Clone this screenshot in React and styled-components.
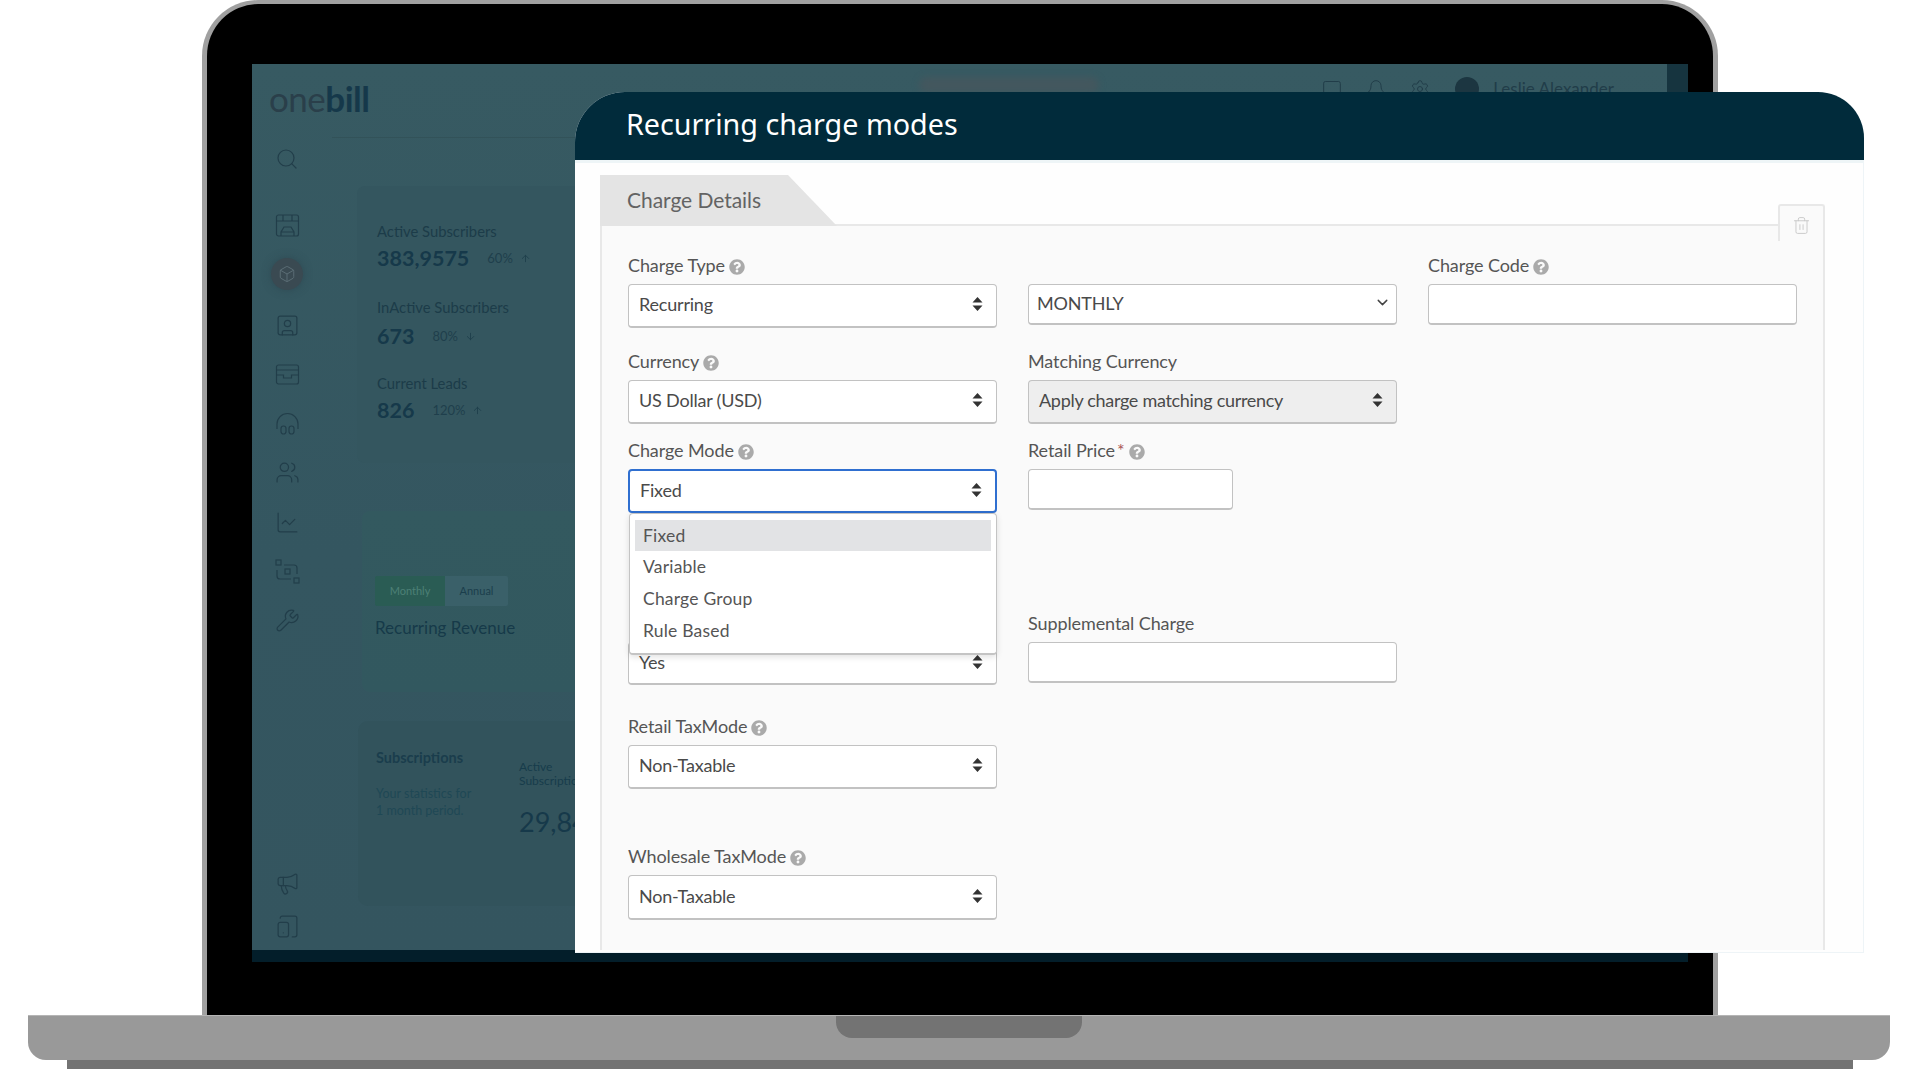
import styled, { createGlobalStyle } from "styled-components";
import { FaQuestionCircle } from "react-icons/fa";
import {
  Search,
  Box,
  SquareUser,
  Users,
  ChartLine,
  Wrench,
  Megaphone,
  TabletSmartphone,
  ArrowUp,
  ArrowDown,
  ChevronDown,
  Trash2,
  MessageSquare,
  Bell,
  Settings,
} from "lucide-react";

const GlobalStyle = createGlobalStyle`
  html, body { margin: 0; padding: 0; background: #fff; overflow: hidden; }
  * { box-sizing: border-box; }
`;

const Stage = styled.div`
  position: relative;
  width: 1920px;
  height: 1069px;
  overflow: hidden;
  background: #fff;
  font-family: Lato, "Liberation Sans", sans-serif;
`;

const Lid = styled.div`
  width: 1516px;
  height: 1015px;
  margin-left: 202px;
  padding: 60px 25px 0 45px;
  background: #000;
  border: solid #a0a0a0;
  border-width: 4px 5px 0 5px;
  border-radius: 56px 56px 0 0;
`;

const Screen = styled.div`
  width: 1436px;
  height: 898px;
  display: flex;
  flex-direction: column;
  background: #16343f;
`;

const Dash = styled.div`
  width: 1415px;
  height: 886px;
  display: flex;
  overflow: hidden;
  background: linear-gradient(180deg, #375a62 0%, #345660 55%, #34555f 100%);
  color: #1d3c49;
`;

const BottomStrip = styled.div`
  height: 12px;
  width: 1436px;
  background: #031e2a;
`;

const Sidebar = styled.aside`
  width: 80px;
  flex: none;
  display: flex;
  flex-direction: column;
  align-items: center;
  padding: 0 10px 11px 0;
`;

const Logo = styled.div`
  align-self: flex-start;
  margin: 15px 0 0 17px;
  height: 38px;
  font-size: 35px;
  line-height: 38px;
  letter-spacing: -0.5px;
  font-weight: 400;
  color: #2a3f4a;
  b {
    font-weight: 700;
    color: #15384a;
  }
`;

const SearchSlot = styled.div`
  margin-top: 30px;
  height: 24px;
  color: #223e4a;
`;

const IconStack = styled.div`
  margin-top: 42px;
  display: flex;
  flex-direction: column;
  align-items: center;
  gap: 24.3px;
  color: #223e4a;
  svg {
    display: block;
  }
`;

const ActiveIcon = styled.div`
  width: 32px;
  height: 32px;
  margin: -4px 0 -2px;
  border-radius: 50%;
  display: flex;
  align-items: center;
  justify-content: center;
  background: #3a4a52;
  color: #5d7078;
  box-shadow: 0 0 8px rgba(40, 60, 70, 0.5);
`;

const BottomIcons = styled(IconStack)`
  margin-top: auto;
  gap: 18px;
`;

const Content = styled.main`
  flex: 1;
  min-width: 0;
`;

const TopBar = styled.header`
  height: 74px;
  padding: 0 53px 24px 587px;
  display: flex;
  align-items: center;
  gap: 24px;
  border-bottom: 1px solid #325259;
  font-size: 17px;
  color: #213d49;
`;

const SearchPill = styled.div`
  width: 180px;
  height: 16px;
  margin: -8px auto 0 0;
  border-radius: 8px;
  background: #43575e;
  filter: blur(3px);
`;

const Avatar = styled.div`
  width: 24px;
  height: 24px;
  margin: 0 -10px 0 1px;
  border-radius: 50%;
  background: #1c3641;
`;

const StatsCard = styled.section`
  height: 277px;
  margin: 48px 0 0 25px;
  padding: 35px 0 0 20px;
  background: #34565f;
  border-radius: 8px;
`;

const Stat = styled.div`
  margin-top: ${(p) => p.$top || 0}px;
`;

const StatLabel = styled.div`
  height: 20px;
  line-height: 20px;
  font-size: 14.8px;
  color: #1c3c49;
`;

const StatRow = styled.div`
  display: flex;
  align-items: center;
  gap: 18px;
  height: 32px;
  margin-top: ${(p) => p.$top || 1}px;
`;

const StatValue = styled.div`
  font-size: 21.5px;
  font-weight: 700;
  color: #16394a;
`;

const StatDelta = styled.div`
  display: flex;
  align-items: center;
  gap: 7px;
  font-size: 13px;
  color: #1f3f4c;
  svg {
    display: block;
  }
`;

const RevenueCard = styled.section`
  height: 181px;
  margin: 48px 0 0 30px;
  padding: 65px 0 0 13px;
  border-radius: 8px;
  background: linear-gradient(180deg, #33595f 0%, #32585f 100%);
`;

const Toggle = styled.div`
  display: flex;
  width: 133px;
  height: 30px;
  font-size: 11px;
  line-height: 30px;
  text-align: center;
`;

const ToggleItem = styled.div`
  width: ${(p) => (p.$on ? 70 : 63)}px;
  background: ${(p) => (p.$on ? "#2a5c54" : "#3a6069")};
  color: ${(p) => (p.$on ? "#4d8076" : "#1a3e4c")};
  border-radius: ${(p) => (p.$on ? "2px 0 0 2px" : "0 2px 2px 0")};
`;

const CardTitle = styled.div`
  margin-top: 10px;
  height: 24px;
  line-height: 24px;
  font-size: 17px;
  color: #163a49;
`;

const SubsCard = styled.section`
  height: 185px;
  margin: 29px 0 0 26px;
  display: flex;
  border-radius: 10px;
  background: #32535c;
`;

const SubsIntro = styled.div`
  width: 161px;
  padding: 27px 0 0 18px;
`;

const SubsTitle = styled.div`
  height: 20px;
  line-height: 20px;
  font-size: 14.5px;
  font-weight: 700;
  color: #1a3d4c;
`;

const SubsNote = styled.div`
  margin-top: 17px;
  font-size: 12.5px;
  line-height: 17px;
  color: #1f4855;
`;

const SubsStat = styled.div`
  padding-top: 39px;
  white-space: nowrap;
  font-size: 12px;
  line-height: 14px;
  color: #173c4b;
`;

const SubsNumber = styled.div`
  margin-top: 16px;
  font-size: 27px;
  line-height: 36px;
  color: #16394a;
`;

const Base = styled.div`
  width: 1862px;
  height: 45px;
  margin-left: 28px;
  display: flex;
  justify-content: center;
  background: #999;
  border-top: 1px solid #b5b5b5;
  border-radius: 0 0 18px 18px;
`;

const Notch = styled.div`
  width: 246px;
  height: 22px;
  background: #737373;
  border-radius: 0 0 16px 16px;
`;

const Foot = styled.div`
  width: 1786px;
  height: 9px;
  margin-left: 67px;
  background: #737373;
`;

const Panel = styled.section`
  position: absolute;
  left: 575px;
  top: 92px;
  width: 1289px;
  height: 861px;
  display: flex;
  flex-direction: column;
  background: #fefefe;
  box-shadow: inset -1px -1px 0 #eef4f7;
  border-radius: 50px 46px 0 0;
`;

const PanelHeader = styled.h1`
  flex: none;
  height: 68px;
  margin: 0;
  padding: 0 0 6px 51px;
  display: flex;
  align-items: center;
  background: #012b3b;
  border-radius: 50px 46px 0 0;
  font-family: "Noto Sans", "Liberation Sans", sans-serif;
  font-size: 28.7px;
  font-weight: 400;
  color: #fff;
  box-shadow: 0 3px 0 #eef5f7;
`;

const PanelBody = styled.div`
  flex: 1;
  min-height: 0;
  padding: 15px 39px 3px 25px;
  display: flex;
  flex-direction: column;
`;

const TabBar = styled.div`
  position: relative;
  flex: none;
  height: 51px;
  margin-bottom: -2px;
`;

const Tab = styled.div`
  width: 237px;
  height: 51px;
  padding: 0 0 2px 27px;
  display: flex;
  align-items: center;
  background: #e4e4e4;
  clip-path: polygon(0 0, 188px 0, 100% 100%, 0 100%);
  font-size: 21px;
  letter-spacing: -0.05px;
  color: #636363;
`;

const DeleteTab = styled.div`
  position: absolute;
  right: 0;
  top: 29px;
  width: 47px;
  height: 37px;
  padding-top: 3px;
  display: flex;
  align-items: center;
  justify-content: center;
  background: #fafafa;
  border: 2px solid #e8e8e8;
  border-bottom: 0;
  border-radius: 3px 3px 0 0;
  color: #c9c9c9;
  z-index: 1;
`;

const Fieldset = styled.div`
  flex: 1;
  min-height: 0;
  padding: 27px 26px 0;
  background: #fafafa;
  border: solid #e8e8e8;
  border-width: 2px 2px 0 2px;
`;

const Row = styled.div`
  display: grid;
  grid-template-columns: repeat(3, 369px);
  column-gap: 31px;
  align-items: start;
  margin-top: ${(p) => p.$top || 0}px;
`;

const Field = styled.div`
  position: relative;
  width: ${(p) => (p.$narrow ? "205px" : "auto")};
`;

const Label = styled.label`
  height: 24px;
  margin-bottom: 7px;
  display: flex;
  align-items: center;
  gap: 4px;
  font-size: 18px;
  letter-spacing: -0.1px;
  color: #555;
  svg {
    margin-top: 4px;
    flex: none;
  }
  i {
    margin-left: -2px;
    font-style: normal;
    color: #a55;
  }
`;

const Control = styled.div`
  height: ${(p) => p.$h || 44}px;
  margin-top: ${(p) => p.$top || 0}px;
  padding: 0 ${(p) => p.$end || 13}px 3px ${(p) => p.$pad || 10}px;
  display: flex;
  align-items: center;
  justify-content: space-between;
  background: ${(p) => (p.$disabled ? "#eee" : "#fff")};
  border: ${(p) => (p.$focus ? "2px solid #2f6fd0" : "1px solid #c2c2c2")};
  border-bottom-width: 2px;
  border-radius: 4px;
  font-size: 18px;
  letter-spacing: ${(p) => (p.$disabled ? "-0.3px" : "-0.2px")};
  color: #4a4a4a;
`;

const Menu = styled.ul`
  position: absolute;
  left: 1px;
  top: 75px;
  z-index: 3;
  width: 368px;
  height: 142px;
  margin: 0;
  padding: 6px 5px;
  list-style: none;
  background: #fff;
  border: 1px solid #c4c4c4;
  border-bottom-width: 2px;
  border-radius: 4px;
  box-shadow: 0 2px 6px rgba(0, 0, 0, 0.12);
`;

const MenuItem = styled.li`
  height: ${(p) => (p.$active ? 31 : 32)}px;
  padding: 0 0 1px 8px;
  display: flex;
  align-items: center;
  background: ${(p) => (p.$active ? "#e2e3e5" : "transparent")};
  font-size: 17.5px;
  letter-spacing: 0.2px;
  color: #555;
`;

const Arrows = () => (
  <svg width="11" height="16" viewBox="0 0 11 16" fill="#333">
    <path d="M5.5 1 10.5 6.5H.5zM5.5 15 .5 9.5h10z" />
  </svg>
);

const Help = () => <FaQuestionCircle size={16} color="#aaa" />;

const ShopIcon = () => (
  <svg width="25" height="25" viewBox="0 0 25 25" fill="none" stroke="currentColor" strokeWidth="1.2">
    <rect x="1.5" y="2" width="22" height="21" rx="2" />
    <path d="M1.5 8h22M8 2v6M17 2v6M6 23v-4l3-5h7l3 5v4M6 19h13" />
  </svg>
);

const TrayIcon = () => (
  <svg width="25" height="25" viewBox="0 0 25 25" fill="none" stroke="currentColor" strokeWidth="1.2">
    <rect x="1.5" y="3" width="22" height="19" rx="2" />
    <path d="M1.5 8h22M1.5 13h7v3h8v-3h7" />
  </svg>
);

const HeadsetIcon = () => (
  <svg width="25" height="25" viewBox="0 0 25 25" fill="none" stroke="currentColor" strokeWidth="1.2">
    <path d="M2 18v-5a10.5 10.5 0 0 1 21 0v5" />
    <rect x="6" y="15" width="5" height="8" rx="2.5" />
    <rect x="14" y="15" width="5" height="8" rx="2.5" />
  </svg>
);

const LinkIcon = () => (
  <svg width="25" height="25" viewBox="0 0 25 25" fill="none" stroke="currentColor" strokeWidth="1.2">
    <rect x="1" y="1" width="5" height="5" />
    <rect x="10" y="10" width="5" height="5" />
    <rect x="19" y="19" width="5" height="5" />
    <path d="M9 6h10q3 0 3 3v6M16 20H5q-3 0-3-3v-6" />
  </svg>
);

export default function App() {
  return (
    <Stage>
      <GlobalStyle />
      <Lid>
        <Screen>
          <Dash>
            <Sidebar>
              <Logo>one<b>bill</b></Logo>
              <SearchSlot><Search size={24} strokeWidth={1.2} /></SearchSlot>
              <IconStack>
                <ShopIcon />
                <ActiveIcon><Box size={18} strokeWidth={1.2} /></ActiveIcon>
                <SquareUser size={25} strokeWidth={1.2} />
                <TrayIcon />
                <HeadsetIcon />
                <Users size={25} strokeWidth={1.2} />
                <ChartLine size={25} strokeWidth={1.2} />
                <LinkIcon />
                <Wrench size={25} strokeWidth={1.2} />
              </IconStack>
              <BottomIcons>
                <Megaphone size={25} strokeWidth={1.2} />
                <TabletSmartphone size={25} strokeWidth={1.2} />
              </BottomIcons>
            </Sidebar>
            <Content>
              <TopBar>
                <SearchPill />
                <MessageSquare size={20} strokeWidth={1.2} />
                <Bell size={20} strokeWidth={1.2} />
                <Settings size={20} strokeWidth={1.2} />
                <Avatar />
                <span>Leslie Alexander</span>
              </TopBar>
              <StatsCard>
                <Stat>
                  <StatLabel>Active Subscribers</StatLabel>
                  <StatRow>
                    <StatValue>383,9575</StatValue>
                    <StatDelta>60% <ArrowUp size={11} /></StatDelta>
                  </StatRow>
                </Stat>
                <Stat $top={23}>
                  <StatLabel>InActive Subscribers</StatLabel>
                  <StatRow $top={3}>
                    <StatValue>673</StatValue>
                    <StatDelta>80% <ArrowDown size={11} /></StatDelta>
                  </StatRow>
                </Stat>
                <Stat $top={21}>
                  <StatLabel>Current Leads</StatLabel>
                  <StatRow>
                    <StatValue>826</StatValue>
                    <StatDelta>120% <ArrowUp size={11} /></StatDelta>
                  </StatRow>
                </Stat>
              </StatsCard>
              <RevenueCard>
                <Toggle>
                  <ToggleItem $on>Monthly</ToggleItem>
                  <ToggleItem>Annual</ToggleItem>
                </Toggle>
                <CardTitle>Recurring Revenue</CardTitle>
              </RevenueCard>
              <SubsCard>
                <SubsIntro>
                  <SubsTitle>Subscriptions</SubsTitle>
                  <SubsNote>Your statistics for<br />1 month period.</SubsNote>
                </SubsIntro>
                <SubsStat>
                  Active<br />Subscriptions
                  <SubsNumber>29,847</SubsNumber>
                </SubsStat>
              </SubsCard>
            </Content>
          </Dash>
          <BottomStrip />
        </Screen>
      </Lid>
      <Base><Notch /></Base>
      <Foot />

      <Panel>
        <PanelHeader>Recurring charge modes</PanelHeader>
        <PanelBody>
          <TabBar>
            <Tab>Charge Details</Tab>
            <DeleteTab><Trash2 size={19} strokeWidth={1.2} /></DeleteTab>
          </TabBar>
          <Fieldset>
            <Row>
              <Field>
                <Label>Charge Type <Help /></Label>
                <Control>Recurring <Arrows /></Control>
              </Field>
              <Field>
                <Label />
                <Control $h={41} $pad={8} $end={5}>MONTHLY <ChevronDown size={17} color="#444" /></Control>
              </Field>
              <Field>
                <Label>Charge Code <Help /></Label>
                <Control $h={41} />
              </Field>
            </Row>
            <Row $top={21}>
              <Field>
                <Label>Currency <Help /></Label>
                <Control>US Dollar (USD) <Arrows /></Control>
              </Field>
              <Field>
                <Label>Matching Currency</Label>
                <Control $disabled>Apply charge matching currency <Arrows /></Control>
              </Field>
            </Row>
            <Row $top={14}>
              <Field>
                <Label>Charge Mode <Help /></Label>
                <Control $focus>Fixed <Arrows /></Control>
                <Menu>
                  <MenuItem $active>Fixed</MenuItem>
                  <MenuItem>Variable</MenuItem>
                  <MenuItem>Charge Group</MenuItem>
                  <MenuItem>Rule Based</MenuItem>
                </Menu>
              </Field>
              <Field $narrow>
                <Label>Retail Price <i>*</i> <Help /></Label>
                <Control $h={41} $top={2} />
              </Field>
            </Row>
            <Row $top={98}>
              <Field>
                <Label />
                <Control $h={43}>Yes <Arrows /></Control>
              </Field>
              <Field>
                <Label>Supplemental Charge</Label>
                <Control $h={41} />
              </Field>
            </Row>
            <Row $top={29}>
              <Field>
                <Label>Retail TaxMode <Help /></Label>
                <Control $h={44}>Non-Taxable <Arrows /></Control>
              </Field>
            </Row>
            <Row $top={55}>
              <Field>
                <Label>Wholesale TaxMode <Help /></Label>
                <Control $h={45}>Non-Taxable <Arrows /></Control>
              </Field>
            </Row>
          </Fieldset>
        </PanelBody>
      </Panel>
    </Stage>
  );
}
